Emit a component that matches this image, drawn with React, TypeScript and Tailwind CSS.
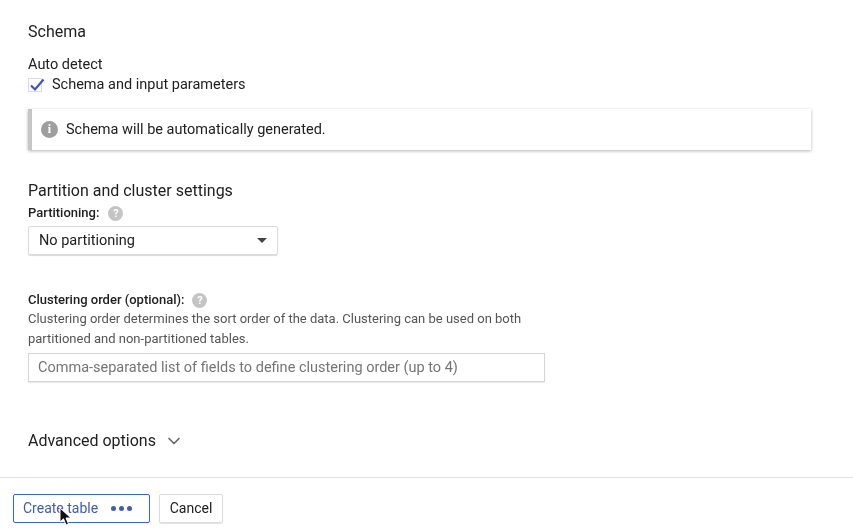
import { ChevronDown } from 'lucide-react';

function HelpIcon() {
  return (
    <span className="w-[15px] h-[15px] rounded-full bg-[#c4c4c4] text-white text-[11px] font-bold leading-[15px] text-center">
      ?
    </span>
  );
}

export default function App() {
  return (
    <div className="relative w-[853px] h-[529px] overflow-hidden bg-white text-[#212121] font-['Roboto',sans-serif] blur-[0.3px]">
      <div className="pl-7 pt-[22px]">
        <h2 className="text-[16px] leading-5">Schema</h2>
        <div className="mt-[14px] text-[14.5px] leading-[18px]">Auto detect</div>
        <label className="mt-[2px] flex items-center gap-[10px] text-[14.5px] leading-[18px]">
          <span className="w-[14px] h-[14px] border border-[#d5daf0] bg-white relative">
            <svg viewBox="0 0 16 16" className="absolute -top-[2px] left-0 w-[16px] h-[16px]" fill="none" stroke="#3b55c4" strokeWidth="2.2">
              <path d="M2 8.5 L6 12.5 L14.5 2.5" />
            </svg>
          </span>
          Schema and input parameters
        </label>
        <div className="mt-[15px] w-[783px] h-[41px] flex items-center border-l-[4px] border-[#c6c6c6] bg-white shadow-[0_1px_3px_rgba(0,0,0,0.3)] pl-[9px]">
          <span className="w-[17px] h-[17px] rounded-full bg-[#9e9e9e] text-white text-[12px] font-bold leading-[17px] text-center font-['Liberation_Serif',serif]">
            i
          </span>
          <span className="ml-[8px] text-[14.5px]">Schema will be automatically generated.</span>
        </div>

        <h2 className="mt-[31px] text-[16px] leading-5">Partition and cluster settings</h2>
        <div className="mt-[3px] flex items-center gap-[9px] h-[18px]">
          <span className="text-[13px] font-medium">Partitioning:</span>
          <HelpIcon />
        </div>
        <div className="mt-[4px] w-[250px] h-[29px] flex items-center justify-between px-[10px] rounded-[2px] border border-[#dcdcdc] shadow-[0_1px_1px_rgba(0,0,0,0.15)] text-[14.5px]">
          No partitioning
          <span className="w-0 h-0 border-x-[5px] border-x-transparent border-t-[5px] border-t-[#444]" />
        </div>

        <div className="mt-[36px] flex items-center gap-[8px] h-[18px]">
          <span className="text-[13px] font-medium">Clustering order (optional):</span>
          <HelpIcon />
        </div>
        <p className="w-[520px] text-[13px] leading-[20px] text-[#555]">
          Clustering order determines the sort order of the data. Clustering can be used on both partitioned and non-partitioned tables.
        </p>
        <div className="mt-[4px] w-[517px] h-[29px] flex items-center px-[9px] border border-[#d6d6d6] shadow-[0_1px_1px_rgba(0,0,0,0.08)] text-[14.5px] text-[#757575]">
          Comma-separated list of fields to define clustering order (up to 4)
        </div>

        <div className="mt-[49px] flex items-center gap-[8px] h-[20px]">
          <span className="text-[16px]">Advanced options</span>
          <ChevronDown className="w-[20px] h-[20px] text-[#666]" strokeWidth={2} />
        </div>
      </div>

      <div className="mt-[26px] border-t border-[#e2e2e2] pl-[13px] pt-[16px] flex gap-[9px]">
        <div className="w-[137px] h-[29px] flex items-center pl-[9px] rounded-[2px] border border-[#3367d6] text-[14px] text-[#3f5cb5]">
          Create table
          <span className="ml-[13px] flex gap-[3px]">
            <span className="w-[5px] h-[5px] rounded-full bg-[#3f5cb5]" />
            <span className="w-[5px] h-[5px] rounded-full bg-[#3f5cb5]" />
            <span className="w-[5px] h-[5px] rounded-full bg-[#3f5cb5]" />
          </span>
        </div>
        <div className="w-[64px] h-[29px] flex items-center justify-center rounded-[2px] border border-[#dcdcdc] shadow-[0_1px_1px_rgba(0,0,0,0.12)] text-[14px]">
          Cancel
        </div>
      </div>

      <svg viewBox="0 0 14 20" className="absolute left-[59px] top-[507px] w-[14px] h-[20px]">
        <path d="M1 1 L1 15 L4.5 11.8 L7 18 L9.5 17 L7 11 L12 11 Z" fill="#111" stroke="#fff" strokeWidth="1" />
      </svg>
    </div>
  );
}
